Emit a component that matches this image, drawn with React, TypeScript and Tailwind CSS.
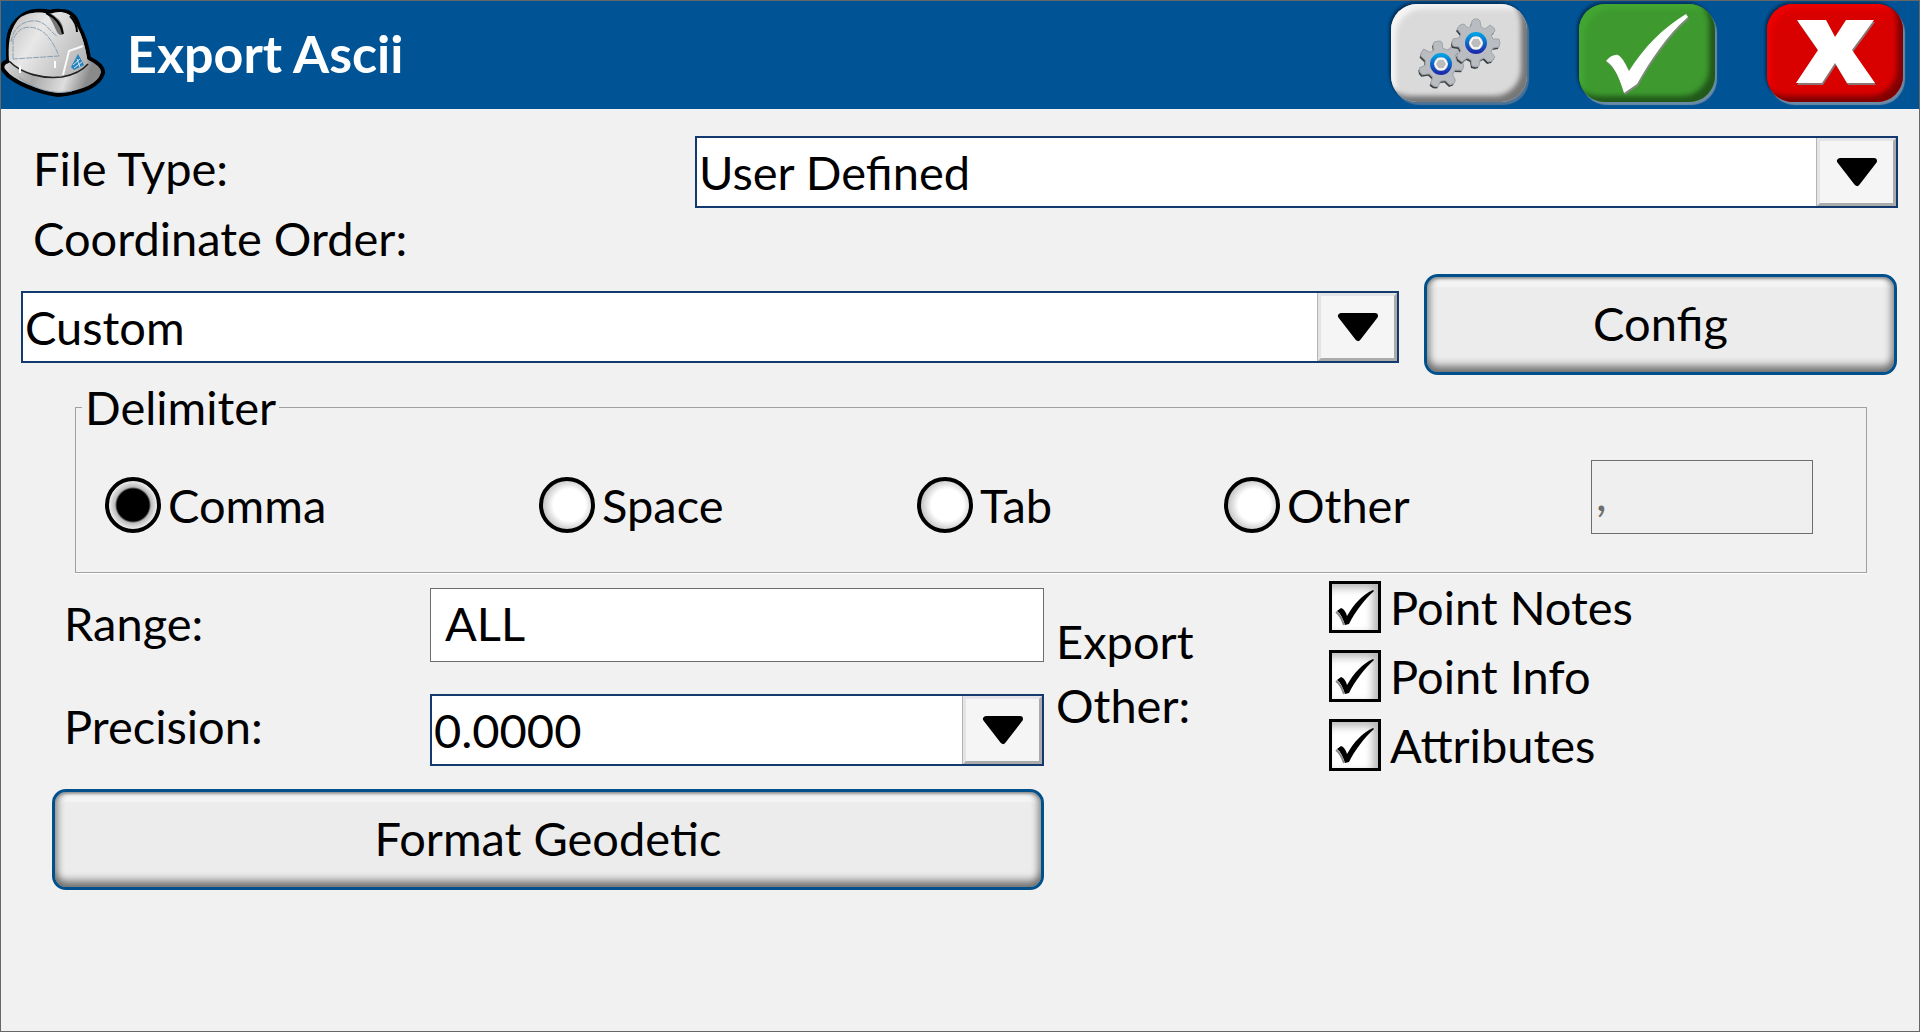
import { useState } from 'react'
import type { ReactNode } from 'react'

type DropdownProps = {
  id: string
  value: string
  options: string[]
  onChange: (value: string) => void
}

const FILE_TYPES = ['User Defined', 'Comma Delimited', 'Space Delimited']
const ORDERS = ['Custom', 'P,N,E,Z,D', 'P,E,N,Z,D']
const PRECISIONS = ['0.00', '0.000', '0.0000', '0.00000']
const DELIMITERS = ['Comma', 'Space', 'Tab', 'Other']
const EXTRAS = ['Point Notes', 'Point Info', 'Attributes']

function Dropdown({ id, value, options, onChange }: DropdownProps) {
  return (
    <div className="relative h-[72px] w-full border-2 border-[#123a6e] bg-white">
      <select
        id={id}
        value={value}
        onChange={(e) => onChange(e.target.value)}
        className="block h-full w-full appearance-none bg-transparent pl-[2px] pr-20 text-black outline-none"
      >
        {options.map((o) => (
          <option key={o}>{o}</option>
        ))}
      </select>
      <div className="pointer-events-none absolute inset-y-0 right-0 w-20 border-l border-[#b4b4b4]">
        <div className="flex h-full items-center justify-center border-[3px] border-t-[#e4e4e8] border-r-[#ababab] border-b-[#ababab] border-l-[#e4e4e8] bg-[#f5f5f5]">
          <svg width="42" height="30" viewBox="0 0 42 30">
            <path d="M4 4H38L21 26Z" stroke="#000" strokeWidth="6" strokeLinejoin="round" />
          </svg>
        </div>
      </div>
    </div>
  )
}

function PushButton({ children }: { children: ReactNode }) {
  return (
    <button
      type="button"
      className="h-[101px] w-full rounded-[14px] border-[3px] border-[#00508c] bg-[#ececec] pb-1 shadow-[inset_0_-12px_9px_-6px_#6f6f6f,inset_9px_0_7px_-6px_#8c8c8c,inset_-9px_0_7px_-6px_#8c8c8c,inset_0_4px_3px_-2px_#909090,inset_0_11px_2px_-1px_#f4f4f4]"
    >
      {children}
    </button>
  )
}

function Helmet() {
  return (
    <svg width="106" height="92" viewBox="0 0 106 92" className="shrink-0">
      <defs>
        <linearGradient id="shell" x1="0" y1="0.2" x2="1" y2="0.7">
          <stop offset="0" stopColor="#c4c4c4" />
          <stop offset="0.35" stopColor="#e8e8e8" />
          <stop offset="1" stopColor="#b4b4b4" />
        </linearGradient>
        <linearGradient id="brim" x1="0" y1="0" x2="1" y2="0.3">
          <stop offset="0" stopColor="#f2f2f2" />
          <stop offset="0.5" stopColor="#a9a9a9" />
          <stop offset="0.8" stopColor="#dedede" />
          <stop offset="1" stopColor="#8a8a8a" />
        </linearGradient>
      </defs>
      <g transform="translate(-1 -7)">
        <path
          d="M8 61C2 63 1 67 4 71C13 83 38 92 58 95C79 93 99 87 103 73C104 67 97 62 89 58C87 45 84 35 79 27C76 15 70 11 61 11C56 10 53 11 50 12C43 10 32 10 25 14C13 21 8 31 8 44Z"
          fill="url(#brim)"
          stroke="#000"
          strokeWidth="4"
          strokeLinejoin="round"
        />
        <path
          d="M9 61C8 45 9 32 17 21C23 12 40 11 50 14C59 10 69 12 73 19C80 30 85 43 88 64C79 72 70 75 62 77C42 78 22 72 9 61Z"
          fill="url(#shell)"
        />
        <path d="M9 61C22 74 42 79 62 77C73 75 82 71 88 64" fill="none" stroke="#222" strokeWidth="1.6" />
        <path d="M46 13C50 17 53 23 56 30C58 35 61 36 63 34C64 28 62 22 57 18C53 14 50 13 46 13Z" fill="#777" />
        <path d="M46 13C55 17 61 23 63 34M70 16C75 21 77 27 77 32" fill="none" stroke="#000" strokeWidth="2" />
        <path
          d="M13 59L13 40C18 27 27 26 35 28C47 31 54 44 59 56L13 59M11 42C14 24 27 20 37 21C47 23 50 32 57 36"
          fill="none"
          stroke="#8b9fb1"
          strokeWidth="1"
          strokeDasharray="6 1"
        />
        <path d="M20 66V73M55 61V68" stroke="#fff" strokeWidth="2" />
        <path d="M63 75L69 51L83 46" fill="none" stroke="#f8f8f8" strokeWidth="2" />
        <path d="M71 67L78 54L84 65L74 70Z" fill="#2583bf" />
        <path d="M73 65L80 59M74 68L82 62M77 59L80 67" stroke="#d7e6ef" strokeWidth="1" />
        <path d="M19 77C35 90 55 95 72 91" fill="none" stroke="#8b9fb1" strokeWidth="1" />
      </g>
    </svg>
  )
}

const GEAR =
  'M-4 -22L-2 -24H2L4 -22L5 -16L9 -14L14 -18L18 -15L19 -12L15 -8L17 -4L23 -4L24 0L23 4L17 5L15 9L19 14L16 18L12 19L8 15L4 17L3 23L0 24L-4 23L-5 17L-9 15L-14 19L-18 16L-19 12L-15 8L-17 4L-23 3L-24 0L-23 -4L-17 -5L-15 -9L-19 -14L-16 -18L-12 -19L-8 -15L-5 -17Z'

// same wheel with seven teeth
const GEAR_SMALL =
  'M-5 -21L-3 -23H2L4 -21L4 -15L9 -13L15 -17L19 -13L19 -10L15 -6L16 -1L22 2L22 6L20 9L13 8L10 12L12 18L10 21L6 22L2 17L-3 17L-6 22L-10 21L-13 18L-10 12L-13 8L-20 8L-22 5L-22 1L-16 -1L-15 -6L-19 -11L-18 -14L-15 -17L-9 -13L-5 -15Z'

function Gear({ x, y, turn, d }: { x: number; y: number; turn: number; d: string }) {
  return (
    <g transform={`translate(${x} ${y})`}>
      <path d={d} transform={`translate(-1 2) rotate(${turn})`} fill="#3c4244" />
      <path d={d} transform={`rotate(${turn})`} fill="#b9bcc1" stroke="#a2a5aa" strokeWidth="1" />
      <circle r="9" fill="#c9cbce" stroke="url(#ring)" strokeWidth="4" />
      <path d="M-6 0L-3 -5H3L6 0L3 5H-3Z" fill="#bcbcbc" stroke="#fff" strokeWidth="1.5" />
    </g>
  )
}

function GearsIcon() {
  return (
    <svg width="136" height="98" viewBox="0 0 136 98">
      <defs>
        <linearGradient id="ring" x1="0" y1="0" x2="0" y2="1">
          <stop offset="0" stopColor="#00a0e4" />
          <stop offset="1" stopColor="#1a2cae" />
        </linearGradient>
      </defs>
      <Gear x={50} y={60} turn={-8} d={GEAR_SMALL} />
      <Gear x={85} y={39} turn={0} d={GEAR} />
    </svg>
  )
}

function CheckIcon() {
  const d = 'M27 57C31 52 36 50 39 51C44 54 47 61 50 67C65 43 84 24 107 10L109 13C88 31 71 57 58 80L45 89C41 76 36 62 27 57Z'
  return (
    <svg width="136" height="98" viewBox="0 0 136 98">
      <path d={d} transform="translate(1 2)" fill="#7d8a7a" />
      <path d={d} fill="#fff" />
    </svg>
  )
}

function CrossIcon() {
  const d = 'M30 16H59L68 33L79 16H107L85 46L108 79H80L68 59L55 79H29L51 46Z'
  return (
    <svg width="136" height="98" viewBox="0 0 136 98">
      <path d={d} transform="translate(1 2)" fill="#8c7474" />
      <path d={d} fill="#fff" />
    </svg>
  )
}

export default function App() {
  const [fileType, setFileType] = useState('User Defined')
  const [order, setOrder] = useState('Custom')
  const [precision, setPrecision] = useState('0.0000')
  const [delimiter, setDelimiter] = useState('Comma')
  const [range, setRange] = useState('ALL')
  const [extras, setExtras] = useState<string[]>(EXTRAS)

  const toggleExtra = (name: string) =>
    setExtras((prev) => (prev.includes(name) ? prev.filter((n) => n !== name) : [...prev, name]))

  return (
    <div className="min-h-screen border border-[#666] bg-[#f1f1f1] font-['Lato',sans-serif] text-[47px] leading-[64px] text-black">
      <header className="flex h-[108px] items-center bg-[#005496] pr-4 pb-1">
        <Helmet />
        <h1 className="ml-5 flex-1 text-[52px] font-bold text-white">Export Ascii</h1>
        <div className="flex gap-[52px]">
          <button
            type="button"
            aria-label="Settings"
            className="rounded-[26px] bg-[#dadada] shadow-[inset_-7px_-7px_5px_-1px_#777,inset_6px_6px_5px_-1px_#f4f4f4,2px_3px_1px_#4d7296,-2px_-2px_3px_#02305a]"
          >
            <GearsIcon />
          </button>
          <button
            type="button"
            aria-label="Accept"
            className="rounded-[26px] bg-[#3e9a2f] shadow-[inset_-7px_-7px_5px_-1px_#22591a,inset_6px_6px_5px_-1px_#43a633,2px_3px_1px_#6b8aa5,-2px_-2px_3px_#02305a]"
          >
            <CheckIcon />
          </button>
          <button
            type="button"
            aria-label="Cancel"
            className="rounded-[26px] bg-[#d90000] shadow-[inset_-7px_-7px_5px_-1px_#800000,inset_6px_6px_5px_-1px_#ec0000,2px_3px_1px_#6b8aa5,-2px_-2px_3px_#02305a]"
          >
            <CrossIcon />
          </button>
        </div>
      </header>

      <main className="pt-[27px]">
        <div className="grid grid-cols-[662fr_1203fr] items-center pr-[21px] pl-8">
          <label htmlFor="file-type" className="pb-2">
            File Type:
          </label>
          <Dropdown id="file-type" value={fileType} options={FILE_TYPES} onChange={setFileType} />
        </div>

        <div className="pb-[6px] pl-8">
          <label htmlFor="order" className="block leading-[60px]">
            Coordinate Order:
          </label>
        </div>

        <div className="grid grid-cols-[1378fr_473fr] items-end gap-x-[25px] pr-[22px] pl-5">
          <div className="pb-3">
            <Dropdown id="order" value={order} options={ORDERS} onChange={setOrder} />
          </div>
          <PushButton>Config</PushButton>
        </div>

        <fieldset className="mr-[52px] ml-[74px] border border-[#a0a0a0] pr-[53px] pb-[38px] pl-[29px] shadow-[0_1px_0_#fff]">
          <legend className="-ml-[23px] px-[3px]">Delimiter</legend>
          <div className="grid grid-cols-[434fr_378fr_307fr_367fr_222fr] items-center pt-[21px]">
            {DELIMITERS.map((name) => (
              <label key={name} className="flex items-center gap-[7px] pt-4 leading-[56px]">
                <input
                  type="radio"
                  name="delimiter"
                  checked={delimiter === name}
                  onChange={() => setDelimiter(name)}
                  className="size-14 shrink-0 appearance-none rounded-full border-4 border-black bg-[radial-gradient(circle_at_55%_50%,#fff_45%,#c8c8c8_72%)] checked:bg-[radial-gradient(circle,#000_16px,#bbb_18px,#eee_24px)]"
                />
                {name}
              </label>
            ))}
            <input
              type="text"
              aria-label="Other delimiter"
              disabled={delimiter !== 'Other'}
              defaultValue=","
              className="h-[74px] w-full min-w-0 border border-[#6d6d6d] bg-[#efefef] pb-2 pl-1 text-[#6d6d6d]"
            />
          </div>
        </fieldset>

        <div className="grid grid-cols-[992fr_272fr_552fr] px-[51px]">
          <div className="pt-[15px]">
            <div className="grid grid-cols-[378fr_614fr] items-center gap-y-8">
              <label htmlFor="range" className="pb-1 pl-3">
                Range:
              </label>
              <input
                id="range"
                type="text"
                value={range}
                onChange={(e) => setRange(e.target.value)}
                className="h-[74px] w-full min-w-0 border border-[#6d6d6d] bg-white pb-1 pl-[14px] outline-none"
              />
              <label htmlFor="precision" className="pb-2 pl-3">
                Precision:
              </label>
              <Dropdown id="precision" value={precision} options={PRECISIONS} onChange={setPrecision} />
            </div>
            <div className="pt-[23px]">
              <PushButton>Format Geodetic</PushButton>
            </div>
          </div>

          <p id="extras-label" className="w-40 pt-9 pl-3">
            Export Other:
          </p>

          <div role="group" aria-labelledby="extras-label" className="flex flex-col items-start gap-[5px] pt-[2px] pl-[13px]">
            {EXTRAS.map((name) => (
              <label key={name} className="flex items-center gap-[9px]">
                <span className="relative block size-[52px] shrink-0">
                  <input
                    type="checkbox"
                    checked={extras.includes(name)}
                    onChange={() => toggleExtra(name)}
                    className="block size-full appearance-none border-[3px] border-black bg-white shadow-[inset_-5px_4px_8px_#b5b5b5]"
                  />
                  {extras.includes(name) && (
                    <svg viewBox="0 0 52 52" className="pointer-events-none absolute inset-0">
                      <path d="M8 30L12 27C15 28 17 31 18 35C25 23 33 14 44 9L45 10C35 19 26 31 20 43L16 44C14 38 12 33 8 30Z" />
                      <path d="M7 31C11 34 13 38 15 44" fill="none" stroke="#888" strokeWidth="2" />
                    </svg>
                  )}
                </span>
                {name}
              </label>
            ))}
          </div>
        </div>
      </main>
    </div>
  )
}
